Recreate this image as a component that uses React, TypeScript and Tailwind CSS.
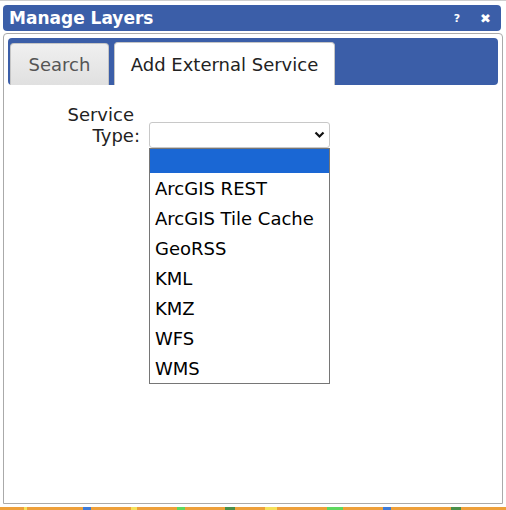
import React from 'react'

const options = ['ArcGIS REST', 'ArcGIS Tile Cache', 'GeoRSS', 'KML', 'KMZ', 'WFS', 'WMS']

export default function App() {
  return (
    <div className="relative w-[506px] h-[510px] bg-white overflow-hidden font-['DejaVu_Sans',sans-serif]">
      <div className="h-[507px] border-t border-[#cfcfcf] px-[3px] pt-[4px] pb-[3px] flex flex-col">
        {/* title bar */}
        <div className="h-[26px] mr-[2px] rounded-[4px] bg-[#3b5ea8] flex items-center justify-between pl-[6px] pr-[10px]">
          <span className="text-white font-bold text-[17px] leading-none">Manage Layers</span>
          <div className="flex items-center gap-[20px] text-white font-bold text-[11px] leading-none">
            <span>?</span>
            <span className="text-[13px]">✖</span>
          </div>
        </div>

        {/* content panel */}
        <div className="mt-[2px] flex-1 border border-[#aaaaaa] rounded-t-[4px] p-[4px]">
          <div className="h-[47px] bg-[#3b5ea8] rounded-[4px] flex items-end gap-[5px] pl-[2px] pt-[5px]">
            <div className="w-[99px] h-[42px] rounded-t-[4px] border border-b-0 border-[#c5c5c5] bg-gradient-to-b from-[#f0f0f0] to-[#e0e0e0] flex items-center justify-center text-[18px] text-[#555555]">
              Search
            </div>
            <div className="w-[221px] h-[43px] rounded-t-[4px] border border-b-0 border-[#c5c5c5] bg-white flex items-center justify-center text-[18px] text-[#222222]">
              Add External Service
            </div>
          </div>

          <div className="flex items-start pt-[19px]">
            <div className="w-[132px] flex flex-col items-end text-[18px] leading-[21px] text-[#222222]">
              <span className="mr-[6px]">Service</span>
              <span>Type:</span>
            </div>
            <div className="relative ml-[9px] mt-[18px]">
              <div className="w-[181px] h-[26px] border border-[#c8c8c8] rounded-[3px] bg-white flex items-center justify-end pr-[4px]">
                <svg width="11" height="8" viewBox="0 0 11 8">
                  <path d="M1.5 1.5 L5.5 5.5 L9.5 1.5" stroke="#111" strokeWidth="2.2" fill="none" />
                </svg>
              </div>
              <div className="absolute left-0 top-[26px] w-[181px] border border-[#767676] bg-white">
                <div className="h-[24px] bg-[#1a67d4]" />
                {options.map((o) => (
                  <div key={o} className="h-[30px] flex items-center pl-[5px] text-[18px] text-black">
                    {o}
                  </div>
                ))}
              </div>
            </div>
          </div>
        </div>
      </div>
      <div className="absolute left-0 right-0 bottom-0 h-[3px] bg-[#eea03a] flex">
        <div className="ml-[24px] w-[3px] bg-[#f5e05a]" />
        <div className="ml-[56px] w-[8px] bg-[#3d7bd8]" />
        <div className="ml-[40px] w-[6px] bg-[#f5e05a]" />
        <div className="ml-[40px] w-[8px] bg-[#5fd85f]" />
        <div className="ml-[40px] w-[10px] bg-[#4a8f4a]" />
        <div className="ml-[30px] w-[12px] bg-[#f5e05a]" />
        <div className="ml-[50px] w-[16px] bg-[#5fd85f]" />
        <div className="ml-[40px] w-[8px] bg-[#3d7bd8]" />
        <div className="ml-[60px] w-[10px] bg-[#4a8f4a]" />
      </div>
    </div>
  )
}
